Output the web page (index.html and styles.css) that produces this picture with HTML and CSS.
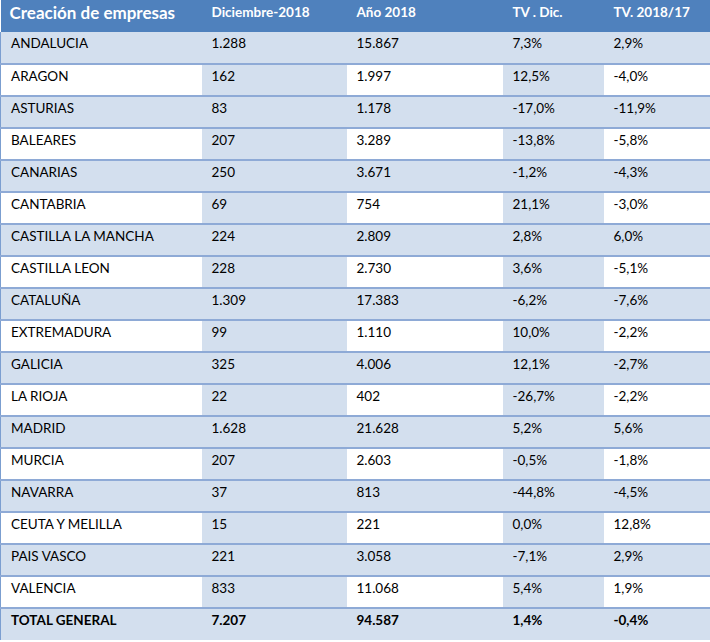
FILE: index.html
```html
<!DOCTYPE html>
<html lang="es">
<head>
<meta charset="utf-8">
<title>Creación de empresas</title>
<link rel="stylesheet" href="styles.css">
</head>
<body>
<table class="tbl">
  <colgroup>
    <col class="c1"><col class="c2"><col class="c3"><col class="c4"><col class="c5">
  </colgroup>
  <thead>
    <tr class="head">
      <th class="title">Creación de empresas</th>
      <th>Diciembre-2018</th>
      <th>Año 2018</th>
      <th>TV . Dic.</th>
      <th>TV. 2018/17</th>
    </tr>
  </thead>
  <tbody>
    <tr class="odd"><td>ANDALUCIA</td><td>1.288</td><td>15.867</td><td>7,3%</td><td>2,9%</td></tr>
    <tr class="even"><td>ARAGON</td><td>162</td><td>1.997</td><td>12,5%</td><td>-4,0%</td></tr>
    <tr class="odd"><td>ASTURIAS</td><td>83</td><td>1.178</td><td>-17,0%</td><td>-11,9%</td></tr>
    <tr class="even"><td>BALEARES</td><td>207</td><td>3.289</td><td>-13,8%</td><td>-5,8%</td></tr>
    <tr class="odd"><td>CANARIAS</td><td>250</td><td>3.671</td><td>-1,2%</td><td>-4,3%</td></tr>
    <tr class="even"><td>CANTABRIA</td><td>69</td><td>754</td><td>21,1%</td><td>-3,0%</td></tr>
    <tr class="odd"><td>CASTILLA LA MANCHA</td><td>224</td><td>2.809</td><td>2,8%</td><td>6,0%</td></tr>
    <tr class="even"><td>CASTILLA LEON</td><td>228</td><td>2.730</td><td>3,6%</td><td>-5,1%</td></tr>
    <tr class="odd"><td>CATALUÑA</td><td>1.309</td><td>17.383</td><td>-6,2%</td><td>-7,6%</td></tr>
    <tr class="even"><td>EXTREMADURA</td><td>99</td><td>1.110</td><td>10,0%</td><td>-2,2%</td></tr>
    <tr class="odd"><td>GALICIA</td><td>325</td><td>4.006</td><td>12,1%</td><td>-2,7%</td></tr>
    <tr class="even"><td>LA RIOJA</td><td>22</td><td>402</td><td>-26,7%</td><td>-2,2%</td></tr>
    <tr class="odd"><td>MADRID</td><td>1.628</td><td>21.628</td><td>5,2%</td><td>5,6%</td></tr>
    <tr class="even"><td>MURCIA</td><td>207</td><td>2.603</td><td>-0,5%</td><td>-1,8%</td></tr>
    <tr class="odd"><td>NAVARRA</td><td>37</td><td>813</td><td>-44,8%</td><td>-4,5%</td></tr>
    <tr class="even"><td>CEUTA Y MELILLA</td><td>15</td><td>221</td><td>0,0%</td><td>12,8%</td></tr>
    <tr class="odd"><td>PAIS VASCO</td><td>221</td><td>3.058</td><td>-7,1%</td><td>2,9%</td></tr>
    <tr class="even"><td>VALENCIA</td><td>833</td><td>11.068</td><td>5,4%</td><td>1,9%</td></tr>
    <tr class="total"><td>TOTAL GENERAL</td><td>7.207</td><td>94.587</td><td>1,4%</td><td>-0,4%</td></tr>
  </tbody>
</table>
</body>
</html>
```
FILE: styles.css
```css
html, body {
  margin: 0;
  padding: 0;
  background: #ffffff;
}
.tbl {
  border-collapse: collapse;
  table-layout: fixed;
  width: 710px;
  font-family: Lato, "Open Sans", sans-serif;
  font-size: 13.5px;
  color: #000;
}
.c1 { width: 201px; }
.c2 { width: 145px; }
.c3 { width: 156px; }
.c4 { width: 101px; }
.c5 { width: 107px; }

.head th {
  background: #4f81bd;
  color: #ffffff;
  font-weight: bold;
  font-size: 13.5px;
  text-align: left;
  vertical-align: top;
  height: 32px;
  padding: 4px 0 0 10px;
  box-sizing: border-box;
}
.head th.title {
  font-size: 17px;
  padding-top: 2px;
  padding-left: 9px;
}
tbody td {
  height: 32px;
  box-sizing: border-box;
  padding: 3px 0 0 10px;
  vertical-align: top;
  border-bottom: 2px solid #8eaad6;
  background: #d3dfee;
  white-space: nowrap;
}
.even td:nth-child(odd) {
  background: #ffffff;
}
.total td {
  font-weight: bold;
  border-bottom: 0;
  border-top: 1px solid #7b9ed0;
}
tbody td:first-child {
  border-left: 1px solid #7b9ed0;
}
```
